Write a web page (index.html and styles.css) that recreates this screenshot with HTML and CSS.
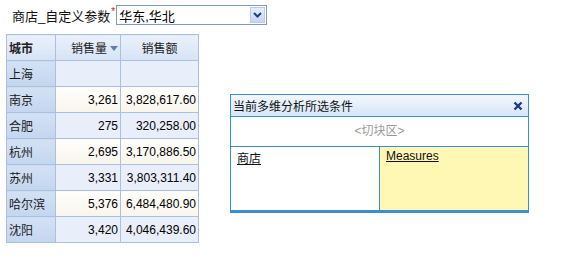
FILE: index.html
```html
<!DOCTYPE html>
<html lang="zh">
<head>
  <meta charset="UTF-8">
  <title>多维分析</title>
  <link rel="stylesheet" href="styles.css">
</head>
<body>
  <div class="param-bar">
    <span class="param-label">商店_自定义参数<span class="req">*</span></span>
    <div class="combo">
      <span class="combo-text">华东,华北</span>
      <span class="combo-btn">
        <svg width="9" height="6" viewBox="0 0 9 6"><path d="M1 1 L4.5 4.5 L8 1" fill="none" stroke="#1f3f86" stroke-width="2"/></svg>
      </span>
    </div>
  </div>

  <div class="main">
    <table class="grid">
      <tr>
        <th class="dim">城市</th>
        <th class="sorted">销售量<span class="sort-arrow"></span></th>
        <th class="amount">销售额</th>
      </tr>
      <tr class="odd"><td class="dim">上海</td><td></td><td></td></tr>
      <tr class="even"><td class="dim">南京</td><td>3,261</td><td>3,828,617.60</td></tr>
      <tr class="odd"><td class="dim">合肥</td><td>275</td><td>320,258.00</td></tr>
      <tr class="even"><td class="dim">杭州</td><td>2,695</td><td>3,170,886.50</td></tr>
      <tr class="odd"><td class="dim">苏州</td><td>3,331</td><td>3,803,311.40</td></tr>
      <tr class="even"><td class="dim">哈尔滨</td><td>5,376</td><td>6,484,480.90</td></tr>
      <tr class="odd"><td class="dim">沈阳</td><td>3,420</td><td>4,046,439.60</td></tr>
    </table>

    <div class="panel">
      <div class="panel-title">
        <span>当前多维分析所选条件</span>
        <svg class="close" width="10" height="10" viewBox="0 0 10 10"><path d="M1.5 1.5 L8.5 8.5 M8.5 1.5 L1.5 8.5" stroke="#1c3a84" stroke-width="2.4"/></svg>
      </div>
      <div class="slicer">&lt;切块区&gt;</div>
      <div class="axes">
        <div class="axis"><a class="axis-link">商店</a></div>
        <div class="axis measures"><a class="axis-link">Measures</a></div>
      </div>
    </div>
  </div>
</body>
</html>
```

FILE: styles.css
```css
body {
  margin: 0;
  padding: 4px 0 0 6px;
  background: #fff;
  color: #000;
  font-family: "Liberation Sans", Arial, "Noto Sans CJK SC", sans-serif;
  font-size: 12px;
}
.param-bar {
  display: flex;
  align-items: center;
  height: 22px;
}
.param-label {
  font-size: 13px;
  margin-left: 6px;
  color: #111;
}
.req {
  color: #d01010;
  font-size: 10px;
  vertical-align: top;
  margin-left: 1px;
}
.combo {
  display: flex;
  align-items: center;
  justify-content: space-between;
  width: 149px;
  height: 18px;
  margin-left: 1px;
  border: 1px solid #7f9db9;
  background: #fff;
}
.combo-text {
  font-size: 13px;
  padding-left: 2px;
}
.combo-btn {
  display: flex;
  align-items: center;
  justify-content: center;
  width: 15px;
  height: 16px;
  margin-right: 1px;
  border: 1px solid #b9cbe9;
  background: linear-gradient(#e6eefc, #c5d6f3);
  box-sizing: border-box;
}
.main {
  display: flex;
  align-items: flex-start;
  margin-top: 8px;
}
.grid {
  border-collapse: collapse;
  border: 1px solid #9fb8da;
}
.grid th, .grid td {
  height: 25px;
  padding: 0 2px;
  border: 1px solid #a9c0de;
  white-space: nowrap;
}
.grid th {
  background: linear-gradient(#eaf1fb, #d6e3f5);
  font-weight: normal;
  color: #222;
  text-align: center;
}
.grid th.dim {
  font-weight: bold;
  text-align: left;
  width: 44px;
}
.grid th.sorted {
  width: 60px;
  text-align: right;
}
.grid th.amount {
  width: 73px;
}
.sort-arrow {
  display: inline-block;
  margin-left: 3px;
  border-left: 4px solid transparent;
  border-right: 4px solid transparent;
  border-top: 5px solid #5f7fa8;
  vertical-align: 2px;
}
.grid td {
  text-align: right;
}
.grid tr.odd td {
  background-color: #e9eefb;
}
.grid tr.even td {
  background: linear-gradient(#fffefb, #f8f5ec);
}
.grid tr td.dim {
  text-align: left;
  background: linear-gradient(#d3e1f4, #c4d6ef);
  color: #1a1a1a;
}
.panel {
  width: 297px;
  margin-left: 31px;
  margin-top: 60px;
  border: 1px solid #3b8fd0;
  border-bottom-width: 3px;
  background: #fff;
}
.panel-title {
  display: flex;
  align-items: center;
  justify-content: space-between;
  height: 21px;
  padding: 0 5px 0 2px;
  background: linear-gradient(#f3f7fd, #d7e5f6);
  color: #111;
}
.slicer {
  height: 29px;
  line-height: 29px;
  text-align: center;
  color: #9a9a9a;
  border-top: 1px solid #3b8fd0;
  border-bottom: 1px solid #3b8fd0;
}
.axes {
  display: flex;
  height: 63px;
}
.axis {
  flex: 1;
  padding: 2px 6px;
}
.axis.measures {
  background: #fff8b5;
  border-left: 1px solid #3b8fd0;
}
.axis-link {
  color: #111;
  text-decoration: underline;
}
```
